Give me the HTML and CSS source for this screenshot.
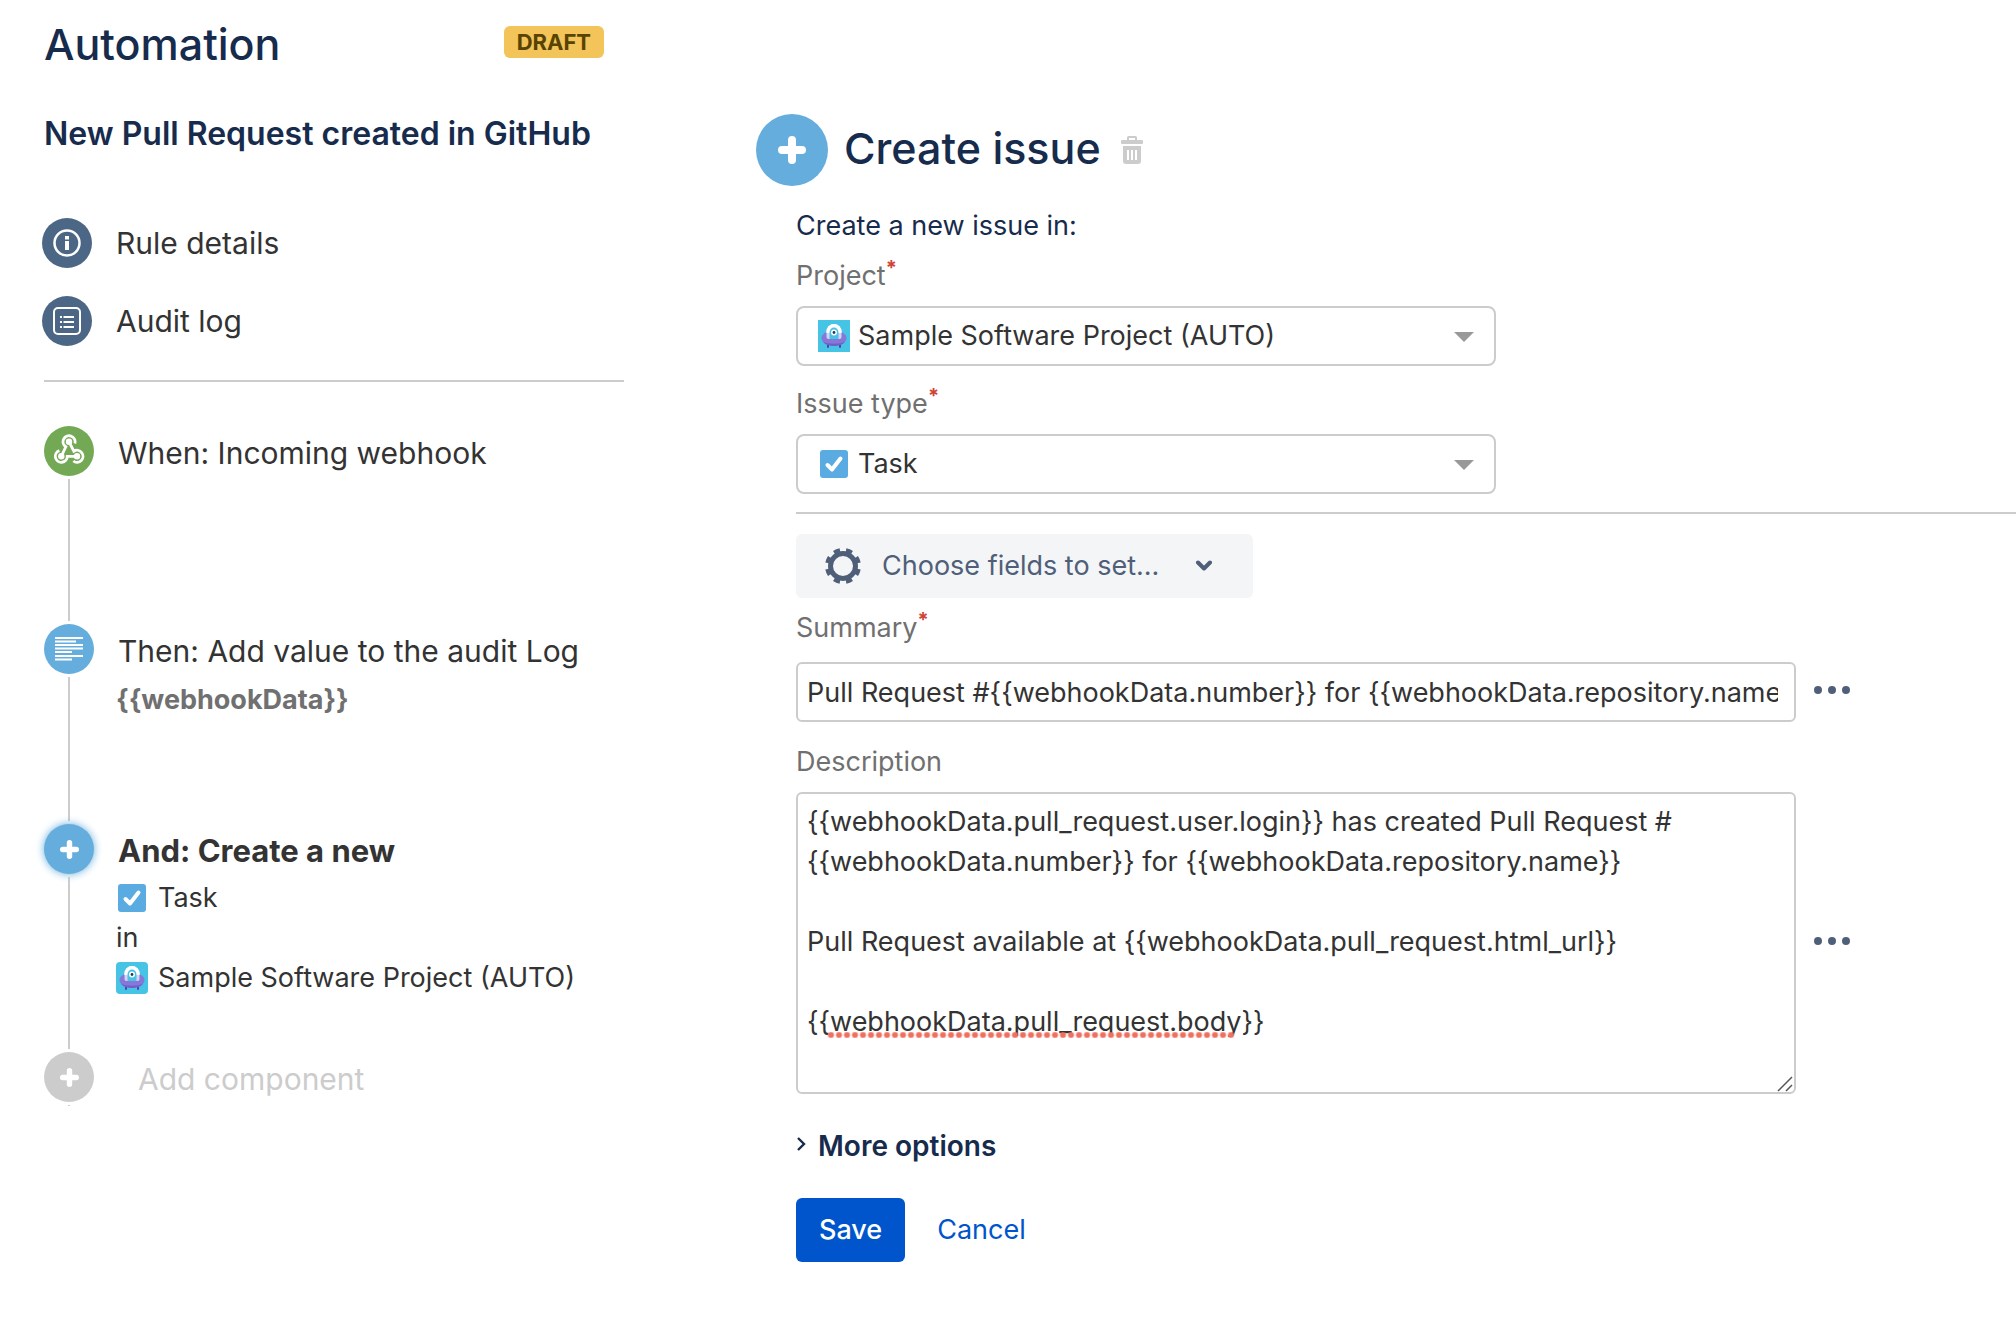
FILE: index.html
```html
<!DOCTYPE html>
<html lang="en">
<head>
  <meta charset="UTF-8" />
  <meta name="viewport" content="width=device-width, initial-scale=1" />
  <title>Automation</title>
  <link rel="stylesheet" href="styles.css">
</head>
<body>

  <svg class="sprite" aria-hidden="true">
    <symbol id="icon-plus" viewBox="0 0 28 28">
      <path d="M14 4v20M4 14h20" fill="none" stroke="#fff" stroke-width="8" stroke-linecap="round" />
    </symbol>
    <symbol id="icon-task" viewBox="0 0 32 32">
      <rect x="2" y="2" width="28" height="28" rx="3" fill="#5aabe2" />
      <path d="M9.500 17l4.500 4.500L22.500 10.500" fill="none" stroke="#fff" stroke-width="4" stroke-linecap="round" stroke-linejoin="round" />
    </symbol>
    <symbol id="icon-project" viewBox="0 0 32 32">
      <rect width="32" height="32" fill="#45c4e5" />
      <path d="M10 23v4M22 23v4" stroke="#5243aa" stroke-width="2" stroke-linecap="round" />
      <path d="M8.500 17v-5.500a7.500 7.500 0 0 1 15 0V17z" fill="#fff" />
      <ellipse cx="16" cy="18" rx="12.500" ry="7.500" fill="#8777d9" />
      <path d="M5 21.500c4 3 18 3 22 0c-3 6-19 6-22 0z" fill="#6f5fc9" />
      <path d="M8.500 11.500h15V17q0 2-2 2h-11q-2 0-2-2z" fill="#d8d2f7" />
      <path d="M8.500 13v-1.500a7.500 7.500 0 0 1 15 0V13z" fill="#fff" />
      <path d="M11.500 19v-6.500a4.500 5 0 0 1 9 0V19z" fill="#45c4e5" />
      <circle cx="16" cy="12.500" r="3" fill="#fff" />
      <circle cx="16" cy="12.500" r="1.400" fill="#253858" />
    </symbol>
    <symbol id="icon-more" viewBox="0 0 36 8">
      <path d="M4 4h0M18 4h0M32 4h0" stroke="#505f79" stroke-width="8" stroke-linecap="round" />
    </symbol>
  </svg>

  <div class="page">
    <aside class="sidebar">
      <header class="sidebar-header">
        <h1 class="title">Automation</h1>
        <span class="badge">DRAFT</span>
      </header>
      <h2 class="rule-name">New Pull Request created in GitHub</h2>

      <nav class="rule-nav">
        <a class="nav-link" href="#details">
          <span class="circle circle-slate">
            <svg width="30" height="30" viewBox="0 0 30 30">
              <circle cx="15" cy="15" r="12.500" fill="none" stroke="#fff" stroke-width="2.500" />
              <path d="M15 8v3.500M15 13v9" stroke="#fff" stroke-width="4" />
            </svg>
          </span>
          Rule details
        </a>
        <a class="nav-link" href="#audit">
          <span class="circle circle-slate">
            <svg width="30" height="30" viewBox="0 0 30 30">
              <rect x="2" y="2" width="26" height="26" rx="4" fill="none" stroke="#fff" stroke-width="2" />
              <path d="M8 11h2M8 16h2M8 21h2M11.500 11H22M11.500 16H22M11.500 21H22" stroke="#fff" stroke-width="2" />
            </svg>
          </span>
          Audit log
        </a>
      </nav>

      <ol class="flow">
        <li class="step step-trigger">
          <span class="circle circle-green">
            <svg width="34" height="34" viewBox="0 0 34 34">
              <g fill="none" stroke="#fff" stroke-width="2.800">
                <path d="M22.800 9.500A6 6 0 1 0 13.800 12.800L9.300 22.300" />
                <path d="M17 7.700L21.800 17.200A6 6 0 1 1 21.300 27" />
                <path d="M25 22.300H15.300A6 6 0 1 1 7.400 16.600" />
              </g>
              <g fill="#fff">
                <circle cx="17" cy="7.700" r="3.200" />
                <circle cx="9.300" cy="22.300" r="3.200" />
                <circle cx="25" cy="22.300" r="3.200" />
              </g>
            </svg>
          </span>
          <div class="step-body"><h3 class="step-title">When: Incoming webhook</h3></div>
        </li>
        <li class="step step-log">
          <span class="circle circle-blue">
            <svg width="28" height="26" viewBox="0 0 28 26">
              <path d="M0 2h28M0 5.500h21M0 9h28M0 12.500h28M0 16h17M0 20h28M0 23.500h17" stroke="#fff" stroke-width="2" />
            </svg>
          </span>
          <div class="step-body">
            <h3 class="step-title">Then: Add value to the audit Log</h3>
            <p class="step-line step-value">{{webhookData}}</p>
          </div>
        </li>
        <li class="step step-create">
          <span class="circle circle-blue circle-active"><svg width="19" height="19"><use href="#icon-plus" /></svg></span>
          <div class="step-body">
            <h3 class="step-title step-title-active">And: Create a new</h3>
            <p class="step-line"><svg class="step-icon"><use href="#icon-task" /></svg>Task</p>
            <p class="step-line">in</p>
            <p class="step-line"><svg class="step-icon step-icon-round"><use href="#icon-project" /></svg>Sample Software Project (AUTO)</p>
          </div>
        </li>
        <li class="step step-add">
          <span class="circle circle-grey"><svg width="19" height="19"><use href="#icon-plus" /></svg></span>
          <button class="add-component" type="button">Add component</button>
        </li>
      </ol>
    </aside>

    <main class="editor">
      <header class="editor-header">
        <span class="circle circle-large circle-blue"><svg width="28" height="28"><use href="#icon-plus" /></svg></span>
        <h2 class="title">Create issue</h2>
        <button class="icon-button" type="button" aria-label="Delete">
          <svg width="22" height="28" viewBox="0 0 22 28" fill="#ccc">
            <path d="M6 4V1.500Q6 0 7.500 0h7Q16 0 16 1.500V4h-2V2H8v2z" />
            <rect y="4" width="22" height="4" rx="1" />
            <path d="M2 10h18v15a3 3 0 0 1-3 3H5a3 3 0 0 1-3-3z" />
            <path d="M7 14v10M11 14v10M15 14v10" stroke="#fff" stroke-width="2" />
          </svg>
        </button>
      </header>

      <form class="form">
        <p class="intro">Create a new issue in:</p>

        <label class="label" for="project">Project<span class="required">*</span></label>
        <div class="select-box">
          <svg class="select-icon"><use href="#icon-project" /></svg>
          <select class="select" id="project"><option>Sample Software Project (AUTO)</option></select>
          <span class="select-arrow"></span>
        </div>

        <label class="label" for="type">Issue type<span class="required">*</span></label>
        <div class="select-box">
          <svg class="select-icon"><use href="#icon-task" /></svg>
          <select class="select" id="type"><option>Task</option></select>
          <span class="select-arrow"></span>
        </div>

        <hr class="divider" />

        <button class="fields-button" type="button">
          <svg width="38" height="38" viewBox="0 0 38 38" fill="none" stroke="#505f79">
            <circle cx="19" cy="19" r="12.500" stroke-width="5" />
            <circle cx="19" cy="19" r="15.500" stroke-width="5" pathLength="80" stroke-dasharray="5 5" stroke-dashoffset="-2.500" />
          </svg>
          Choose fields to set...
          <svg class="chevron" width="18" height="12" viewBox="0 0 18 12">
            <path d="M3 2.500l6 6l6-6" fill="none" stroke="#505f79" stroke-width="4" stroke-linecap="round" stroke-linejoin="round" />
          </svg>
        </button>

        <label class="label" for="summary">Summary<span class="required">*</span></label>
        <div class="field-row">
          <input class="text-field" id="summary" type="text" value="Pull Request #{{webhookData.number}} for {{webhookData.repository.name}}" />
          <button class="icon-button more-button" type="button" aria-label="Summary options">
            <svg width="36" height="8"><use href="#icon-more" /></svg>
          </button>
        </div>

        <label class="label" for="description">Description</label>
        <div class="field-row field-row-tall">
          <div class="text-wrap">
            <textarea class="text-field text-area" id="description" spellcheck="false">{{webhookData.pull_request.user.login}} has created Pull Request #{{webhookData.number}} for {{webhookData.repository.name}}

Pull Request available at {{webhookData.pull_request.html_url}}

{{webhookData.pull_request.body}}</textarea>
            <span class="spelling-mark"></span>
            <svg class="resize-grip" viewBox="0 0 16 16"><path d="M1 15L15 1M9 15l6-6" stroke="#555" stroke-width="1.500" /></svg>
          </div>
          <button class="icon-button more-button" type="button" aria-label="Description options">
            <svg width="36" height="8"><use href="#icon-more" /></svg>
          </button>
        </div>

        <button class="more-options" type="button">
          <svg width="10" height="20" viewBox="0 0 10 20"><path d="M2 2l6 6l-6 6" fill="none" stroke="#172b4d" stroke-width="2.400" /></svg>
          More options
        </button>

        <div class="actions">
          <button class="save" type="submit">Save</button>
          <a class="cancel" href="#cancel">Cancel</a>
        </div>
      </form>
    </main>
  </div>

</body>
</html>
```

FILE: styles.css
```css
* {
  box-sizing: border-box;
}

body {
  margin: 0;
  background: #fff;
  color: #333;
  font-family: Inter, "Liberation Sans", sans-serif;
  font-size: 27px;
  line-height: 40px;
}

h1, h2, h3, p, ol {
  margin: 0;
  padding: 0;
}

button, input, select, textarea {
  font: inherit;
  color: inherit;
}

button {
  padding: 0;
  border: 0;
  background: none;
  cursor: pointer;
}

svg {
  display: block;
  flex: none;
}

.sprite {
  position: absolute;
  width: 0;
  height: 0;
}

.page {
  display: flex;
}

/* Sidebar */

.sidebar {
  flex: none;
  width: 624px;
  padding: 20px 0 40px 44px;
}

.sidebar-header {
  display: flex;
  justify-content: space-between;
  align-items: flex-start;
  padding-right: 20px;
}

.title {
  color: #172b4d;
  font-size: 43px;
  font-weight: 500;
  line-height: 48px;
}

.badge {
  margin-top: 6px;
  padding: 0 13px;
  border-radius: 6px;
  background: #f2c45a;
  color: #594300;
  font-size: 22px;
  font-weight: 700;
  line-height: 32px;
}

.rule-name {
  margin-top: 46px;
  color: #172b4d;
  font-size: 32px;
  font-weight: 600;
}

.rule-nav {
  display: flex;
  flex-direction: column;
  gap: 28px;
  margin-top: 64px;
  padding-bottom: 34px;
  border-bottom: 2px solid #ccc;
}

.nav-link {
  display: flex;
  align-items: center;
  gap: 24px;
  margin-left: -2px;
  color: #333;
  font-size: 30px;
  line-height: 50px;
  text-decoration: none;
}

.circle {
  display: flex;
  flex: none;
  align-items: center;
  justify-content: center;
  width: 50px;
  height: 50px;
  border-radius: 50%;
}

.circle-large {
  width: 72px;
  height: 72px;
}

.circle-slate {
  background: #4c6785;
}

.circle-green {
  background: #73a954;
}

.circle-blue {
  background: #65addd;
}

.circle-grey {
  background: #ccc;
}

.circle-active {
  box-shadow: 0 0 8px #65addd;
}

.flow {
  margin-top: 44px;
  list-style: none;
}

.step {
  display: grid;
  grid-template-columns: 50px 1fr;
  grid-template-rows: 50px 1fr;
  column-gap: 24px;
}

/* line down to the next step */
.step::after {
  content: "";
  grid-column: 1;
  grid-row: 2;
  justify-self: center;
  width: 2px;
  margin: 3px 0;
  background: #ccc;
}

.step-body {
  grid-column: 2;
  grid-row: 1 / 3;
}

.step-trigger {
  height: 198px;
}

.step-log {
  height: 200px;
}

.step-create {
  height: 228px;
}

.step-add::after {
  height: 1px;
}

.step-title {
  font-size: 30px;
  font-weight: 400;
  line-height: 54px;
}

.step-title-active {
  font-size: 31px;
  font-weight: 700;
}

.step-line {
  display: flex;
  align-items: center;
  gap: 10px;
  margin-left: -2px;
}

.step-value {
  color: #707070;
  font-weight: 700;
  line-height: 44px;
}

.step-icon {
  width: 32px;
  height: 32px;
}

.step-icon-round {
  border-radius: 4px;
}

.add-component {
  margin-left: 20px;
  color: #ccc;
  font-size: 30px;
  line-height: 54px;
  text-align: left;
}

/* Editor */

.editor {
  flex: 1;
  min-width: 0;
  padding: 114px 0 40px 132px;
}

.editor-header {
  display: flex;
  align-items: center;
}

.editor-header .title {
  padding: 0 20px 4px 16px;
}

.form {
  display: flex;
  flex-direction: column;
  align-items: flex-start;
  padding: 20px 0 0 40px;
}

.intro {
  color: #172b4d;
}

.label {
  margin-top: 10px;
  color: #707070;
}

.required {
  color: #d04437;
  font-size: 20px;
  font-weight: 700;
  line-height: 20px;
  vertical-align: 10px;
}

.select-box {
  position: relative;
  width: 700px;
  max-width: 100%;
  margin: 10px 0 8px;
}

.select {
  display: block;
  width: 100%;
  height: 60px;
  padding: 0 60px;
  border: 2px solid #ccc;
  border-radius: 8px;
  background: #fff;
  appearance: none;
}

.select-icon {
  position: absolute;
  top: 14px;
  left: 22px;
  width: 32px;
  height: 32px;
}

.select-arrow {
  position: absolute;
  top: 26px;
  right: 22px;
  border: 10px solid transparent;
  border-top-color: #999;
  border-bottom: 0;
}

.divider {
  width: 100%;
  margin: 10px 0 20px;
  border: 0;
  border-top: 2px solid #ccc;
}

.fields-button {
  display: flex;
  align-items: center;
  gap: 20px;
  height: 64px;
  padding: 0 40px 0 28px;
  border-radius: 6px;
  background: #f4f5f7;
  color: #505f79;
}

.chevron {
  margin-left: 16px;
}

.field-row {
  display: flex;
  align-items: center;
  gap: 18px;
  width: 1054px;
  max-width: 100%;
  margin: 14px 0 10px;
}

.field-row-tall {
  margin-top: 10px;
}

.text-wrap {
  position: relative;
  flex: 1;
}

.text-field {
  flex: 1;
  width: 100%;
  min-width: 0;
  height: 60px;
  padding: 0 16px 0 9px;
  border: 2px solid #ccc;
  border-radius: 6px;
  background: #fff;
}

.text-area {
  display: block;
  height: 302px;
  padding-top: 8px;
  resize: none;
  overflow: hidden;
}

/* red dots under the word flagged by the spelling check */
.spelling-mark {
  position: absolute;
  top: 240px;
  left: 31px;
  width: 408px;
  height: 6px;
  background: radial-gradient(circle, #f0705f 2px, transparent 4px) 0 0 / 8px 6px;
}

.resize-grip {
  position: absolute;
  right: 3px;
  bottom: 2px;
  width: 16px;
  height: 16px;
}

.more-button {
  padding-bottom: 4px;
}

.more-options {
  display: flex;
  align-items: center;
  gap: 12px;
  margin-top: 22px;
  color: #172b4d;
  font-size: 28px;
  font-weight: 600;
}

.actions {
  display: flex;
  align-items: center;
  gap: 32px;
  margin-top: 32px;
}

.save {
  height: 64px;
  padding: 0 23px;
  border-radius: 6px;
  background: #0055cc;
  color: #fff;
  font-weight: 500;
}

.cancel {
  color: #0055cc;
  text-decoration: none;
}
```
